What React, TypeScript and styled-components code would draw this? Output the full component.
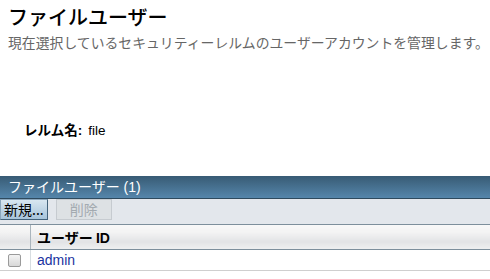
import React from "react";
import styled, { createGlobalStyle } from "styled-components";

const Global = createGlobalStyle`
  body {
    margin: 0;
    background: #fff;
    font-family: "Liberation Sans", "Noto Sans CJK JP", sans-serif;
  }
`;

const Page = styled.div`
  width: 490px;
  height: 279px;
  overflow: hidden;
`;

const Head = styled.div`
  padding: 5px 0 0 8px;
  height: 105px;
`;

const Title = styled.h1`
  margin: 0;
  font-size: 20px;
  font-weight: 500;
  color: #000;
  line-height: 27px;
`;

const Help = styled.div`
  margin-top: 2px;
  font-size: 13.85px;
  color: #666;
  white-space: nowrap;
  line-height: 18px;
`;

const Prop = styled.div`
  display: flex;
  gap: 6px;
  padding-left: 24px;
  height: 66px;
  font-size: 13.5px;
  line-height: 20px;
  padding-top: 11px;
  box-sizing: border-box;
`;

const PropLabel = styled.span`
  font-weight: bold;
`;

const TableTitle = styled.div`
  height: 22px;
  background: linear-gradient(#385b74, #5586ab);
  border-bottom: 1px solid #2e4a5e;
  color: #fff;
  font-size: 14px;
  line-height: 22px;
  padding-left: 8px;
  white-space: nowrap;
`;

const Toolbar = styled.div`
  display: flex;
  align-items: center;
  gap: 8px;
  height: 25px;
  background: #e3e7ec;
  border-bottom: 1px solid #7d8f9c;
`;

const Button = styled.button<{ $disabled?: boolean }>`
  height: 21px;
  margin-top: -4px;
  padding: 0 ${(p) => (p.$disabled ? "13px" : "3px")};
  font-family: "Noto Sans CJK JP", sans-serif;
  font-size: 14px;
  line-height: 19px;
  color: ${(p) => (p.$disabled ? "#a3aab0" : "#000")};
  background: ${(p) =>
    p.$disabled ? "#dde1e4" : "linear-gradient(#d8e6f0, #a7c4da)"};
  border: 1px solid ${(p) => (p.$disabled ? "#c6cbd0" : "#8aa6bc")};
  border-right-color: ${(p) => (p.$disabled ? "#c6cbd0" : "#43627a")};
  border-bottom-color: ${(p) => (p.$disabled ? "#c6cbd0" : "#43627a")};
  border-radius: 0;
`;

const Table = styled.table`
  width: 100%;
  border-collapse: collapse;
  font-size: 14px;
`;

const Th = styled.th<{ $narrow?: boolean }>`
  height: 24px;
  padding: 0 0 0 6px;
  text-align: left;
  width: ${(p) => (p.$narrow ? "24px" : "auto")};
  background: linear-gradient(#f8f8f8 0%, #f3f3f3 30%, #e2e3e5 70%, #eeeff0 100%);
  border-bottom: 1px solid #7d8f9c;
  border-right: 1px solid #aab5bd;
  font-family: "Noto Sans CJK JP", sans-serif;
  font-weight: bold;
  &:last-child {
    border-right: none;
  }
`;

const IdText = styled.span`
  font-family: "Liberation Sans", sans-serif;
`;

const Td = styled.td`
  height: 20px;
  padding: 0 0 0 6px;
  border-bottom: 1px solid #cfcfcf;
  border-right: 1px solid #d8dde1;
  &:last-child {
    border-right: none;
  }
`;

const Box = styled.span`
  display: block;
  width: 11px;
  height: 11px;
  margin-left: 2px;
  border: 1px solid #9a9a9a;
  border-radius: 2px;
  background: linear-gradient(#f4f4f4, #d8d8d8);
`;

const Link = styled.a`
  color: #1a33a0;
  text-decoration: none;
  font-size: 14px;
`;

export default function App() {
  return (
    <Page>
      <Global />
      <Head>
        <Title>ファイルユーザー</Title>
        <Help>現在選択しているセキュリティーレルムのユーザーアカウントを管理します。</Help>
      </Head>
      <Prop>
        <PropLabel>レルム名:</PropLabel>
        <span>file</span>
      </Prop>
      <TableTitle>ファイルユーザー (1)</TableTitle>
      <Toolbar>
        <Button>新規...</Button>
        <Button $disabled>削除</Button>
      </Toolbar>
      <Table>
        <thead>
          <tr>
            <Th $narrow />
            <Th>
              ユーザー <IdText>ID</IdText>
            </Th>
          </tr>
        </thead>
        <tbody>
          <tr>
            <Td>
              <Box />
            </Td>
            <Td>
              <Link href="#">admin</Link>
            </Td>
          </tr>
        </tbody>
      </Table>
    </Page>
  );
}
